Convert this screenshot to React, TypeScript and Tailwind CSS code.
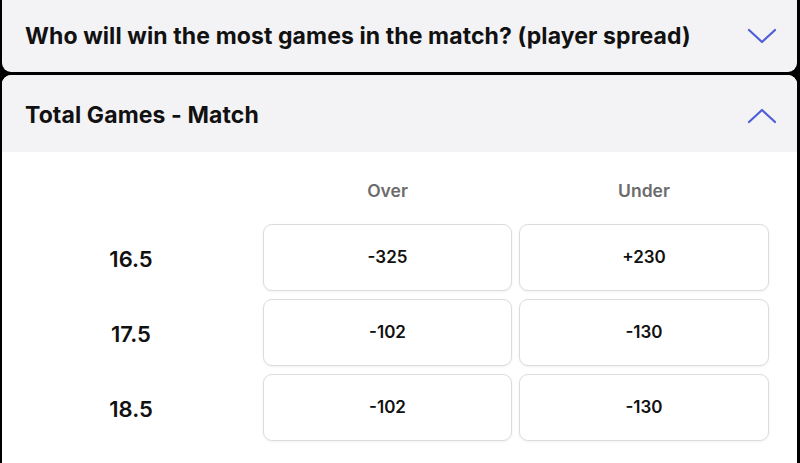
import React from "react";

const ROWS = [
  { line: "16.5", over: "-325", under: "+230" },
  { line: "17.5", over: "-102", under: "-130" },
  { line: "18.5", over: "-102", under: "-130" },
];

function Chevron({ up }: { up?: boolean }) {
  return (
    <svg width="30" height="18" viewBox="0 0 30 18" fill="none" className="shrink-0">
      <path
        d={up ? "M2 15L15 3L28 15" : "M2 3L15 15L28 3"}
        stroke="#4c5ed8"
        strokeWidth="2.2"
        strokeLinecap="round"
        strokeLinejoin="round"
      />
    </svg>
  );
}

function OddsButton({ value }: { value: string }) {
  return (
    <button
      type="button"
      className="h-[67px] w-full rounded-[9px] border border-[#dcdcdc] bg-white text-[17px] font-semibold text-[#111] shadow-[0_1px_3px_rgba(0,0,0,0.06)]"
    >
      {value}
    </button>
  );
}

export default function App() {
  return (
    <div
      className="flex h-[463px] w-[800px] flex-col gap-[3px] overflow-hidden bg-black pl-[2px] pr-[3px]"
      style={{ fontFamily: "Inter, 'Liberation Sans', sans-serif" }}
    >
      <div className="flex h-[72px] shrink-0 items-center justify-between rounded-b-[9px] bg-[#f3f3f5] pl-[23px] pr-[20px]">
        <h2 className="text-[23px] font-bold tracking-[0.1px] text-[#111]">
          Who will win the most games in the match? (player spread)
        </h2>
        <Chevron />
      </div>

      <div className="flex flex-1 flex-col overflow-hidden rounded-t-[9px] bg-white">
        <div className="flex h-[77px] shrink-0 items-center justify-between bg-[#f3f3f5] pl-[23px] pr-[20px] pt-[4px]">
          <h2 className="text-[23px] font-bold tracking-[0.1px] text-[#111]">Total Games - Match</h2>
          <Chevron up />
        </div>

        <div className="grid grid-cols-[254px_249px_250px] gap-x-[7px] gap-y-[8px] pr-[28px] pt-[26px]">
          <div />
          <div className="pb-[12px] text-center text-[17.5px] font-semibold text-[#6b6b6b]">Over</div>
          <div className="pb-[12px] text-center text-[17.5px] font-semibold text-[#6b6b6b]">Under</div>
          {ROWS.map((r) => (
            <React.Fragment key={r.line}>
              <div className="flex items-center justify-center pl-[4px] pt-[4px] text-[22px] font-semibold text-[#111]">
                {r.line}
              </div>
              <OddsButton value={r.over} />
              <OddsButton value={r.under} />
            </React.Fragment>
          ))}
        </div>
      </div>
    </div>
  );
}
